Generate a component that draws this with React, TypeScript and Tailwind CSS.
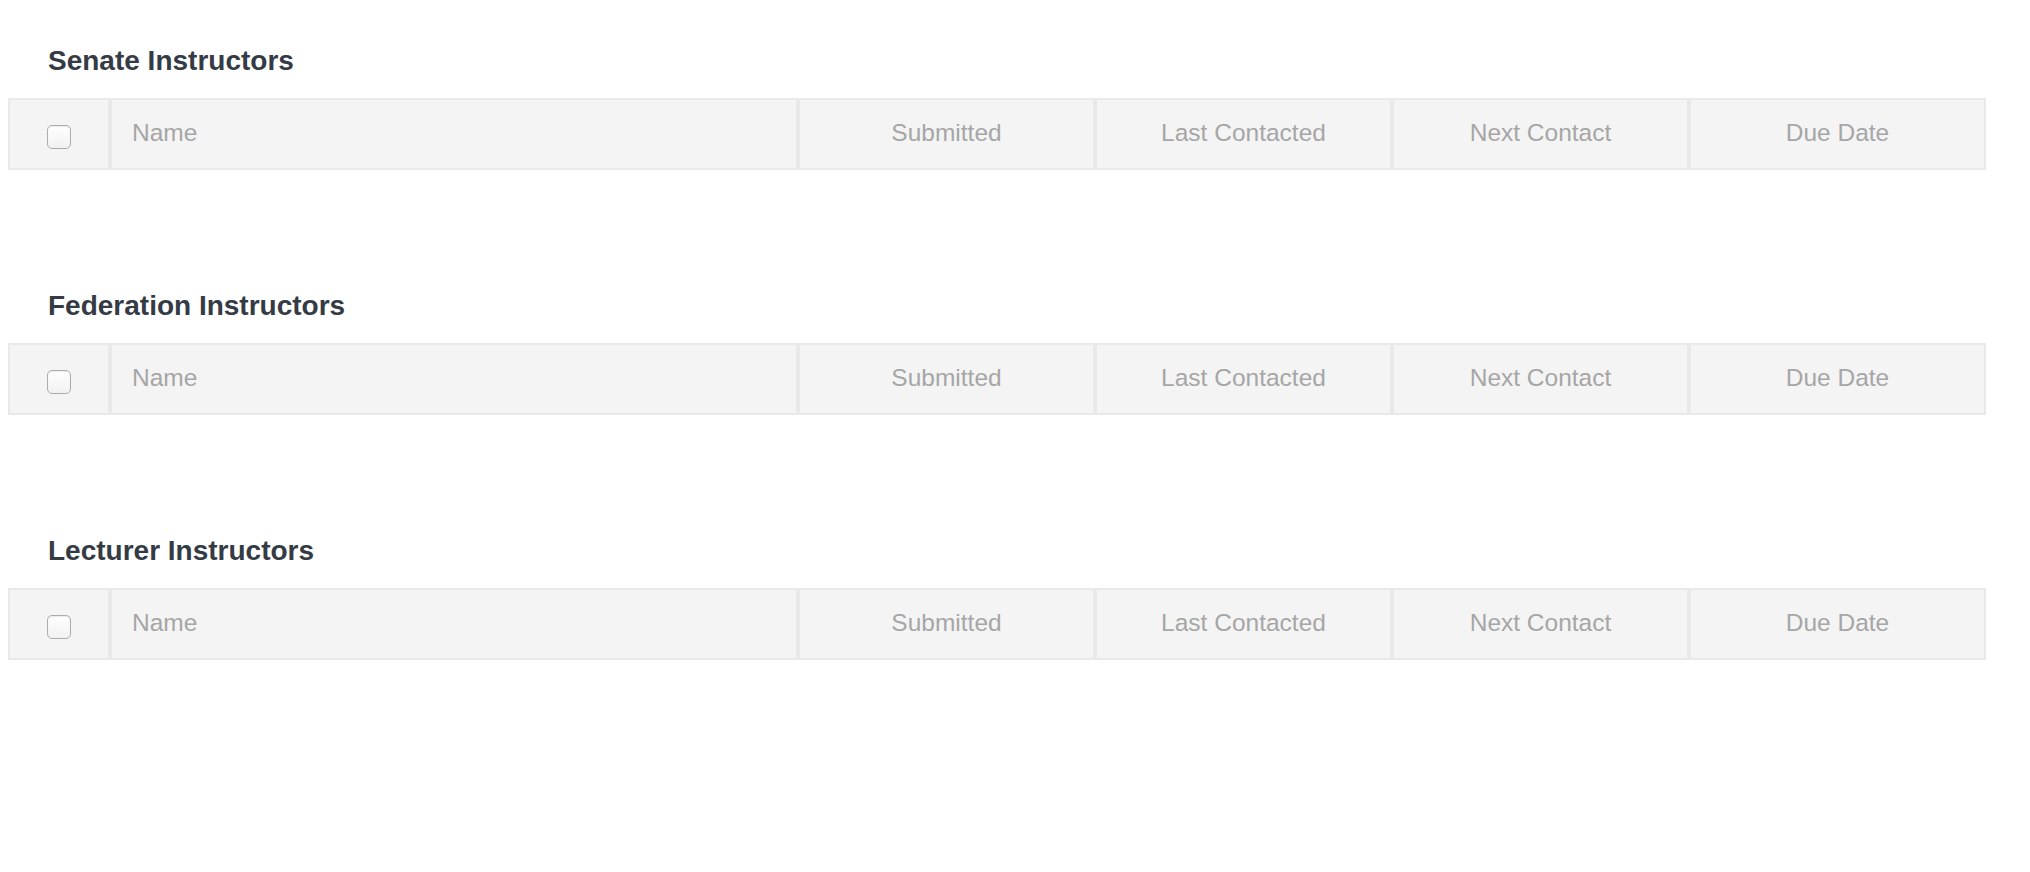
const sections = ['Senate Instructors', 'Federation Instructors', 'Lecturer Instructors'];

const cols = ['Submitted', 'Last Contacted', 'Next Contact', 'Due Date'];

const cell = 'h-[72px] border-2 border-[#e9e9e9] bg-[#f4f4f4] flex items-center';

function Checkbox() {
    return (
        <span className="mt-[6px] block h-[24px] w-[24px] rounded-[5px] border border-[#acacac] bg-gradient-to-b from-white to-[#f1f1f1] shadow-[inset_0_1px_1px_rgba(0,0,0,0.08)]" />
    );
}

function InstructorTable({ title }: { title: string }) {
    return (
        <section>
            <h2 className="pl-[40px] mb-[21px] text-[28px] leading-[32px] font-bold text-[#353b45]">{title}</h2>
            <div className="grid grid-cols-[102px_688px_297px_297px_297px_297px] text-[24.5px] text-[#a6a6a6]">
                <div className={`${cell} justify-center`}>
                    <Checkbox />
                </div>
                <div className={`${cell} pl-[20px] pb-[2px]`}>Name</div>
                {cols.map((c) => (
                    <div key={c} className={`${cell} justify-center pb-[2px]`}>
                        {c}
                    </div>
                ))}
            </div>
        </section>
    );
}

export default function App() {
    return (
        <div className="min-h-screen bg-white pl-[8px] pt-[45px] font-['Liberation_Sans',Arial,sans-serif]">
            <div className="flex flex-col gap-[120px]">
                {sections.map((s) => (
                    <InstructorTable key={s} title={s} />
                ))}
            </div>
        </div>
    );
}
